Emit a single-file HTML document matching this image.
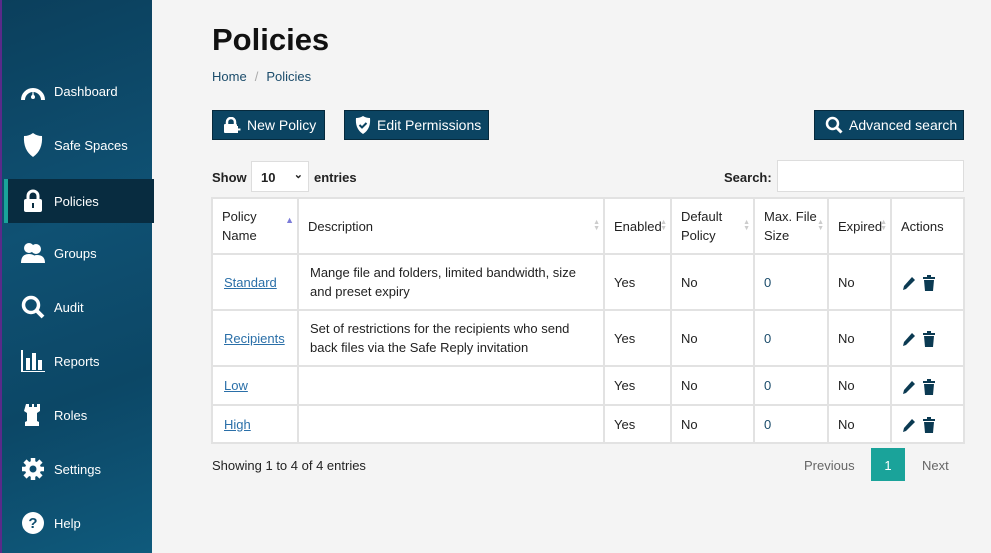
<!DOCTYPE html><html><head><style>
*{box-sizing:border-box;margin:0;padding:0}
body{width:991px;height:553px;overflow:hidden;background:#f4f4f4;font-family:"Liberation Sans",sans-serif;font-size:13px;color:#222;position:relative}
.sb{position:absolute;left:0;top:0;width:152px;height:553px;background:linear-gradient(160deg,#0b3f5c 0%,#0f5173 40%,#0c4766 70%,#0f5a7c 100%);border-left:2px solid #5a2a8a}
.it{position:absolute;left:2px;width:150px;height:44px;color:#fff;font-size:13px;display:flex;align-items:center}
.it .ic{width:26px;height:26px;margin-left:16px;margin-right:8px;display:flex;align-items:center;justify-content:center}
.it.act{background:#082c40;border-left:4px solid #1aa39a}
.it.act .ic{margin-left:12px}
h1{position:absolute;left:212px;top:22px;font-size:31px;font-weight:bold;color:#111}
.bc{position:absolute;left:212px;top:69px;font-size:13px;color:#1b4c6b}
.bc span{color:#aaa;margin:0 8px}
.btn{position:absolute;top:110px;height:30px;background:#0b4462;color:#fff;border:1px solid #062a3d;font-size:14px;display:flex;align-items:center;padding-left:10px;gap:6px}
table{position:absolute;left:211px;top:197px;border-collapse:separate;border-spacing:2px;background:#e2e2e2;table-layout:fixed;width:754px}
td,th{background:#fff;text-align:left;vertical-align:middle;padding:0 9px;font-size:13px;line-height:19px;font-weight:normal;overflow:hidden}
th{height:54px;position:relative}
tr.t td{height:54px}
tr.s td{height:37px}
tr.s2 td{height:36px}
td a{color:#2a6fa8;text-decoration:underline}
td.n{color:#1b4c6b}
.srt{position:absolute;right:3px;top:21px;font-size:7px;color:#ccc;line-height:6px}
.ac svg{vertical-align:middle;margin-right:8px}
</style></head><body>
<div class="sb">
<div class="it" style="top:69px"><div class="ic"><svg width="24" height="22" viewBox="0 0 24 22"><path d="M2 20A10 10 0 1 1 22 20" stroke="#fff" stroke-width="4" fill="none"/><path d="M12 8l-1 9h2z" fill="#fff"/><circle cx="12" cy="17" r="2" fill="#fff"/></svg></div>Dashboard</div>
<div class="it" style="top:123px"><div class="ic"><svg width="22" height="24" viewBox="0 0 22 24"><path d="M2 3q5 0 9-3q4 3 9 3q1 14-9 21q-10-7-9-21z" fill="#fff"/></svg></div>Safe Spaces</div>
<div class="it act" style="top:179px"><div class="ic"><svg width="20" height="24" viewBox="0 0 20 24"><path d="M5 10V7a5 5 0 0 1 10 0v3" stroke="#fff" stroke-width="3" fill="none"/><rect x="1" y="10" width="18" height="13" rx="2" fill="#fff"/><rect x="9" y="14" width="2" height="5" fill="#082c40"/></svg></div>Policies</div>
<div class="it" style="top:231px"><div class="ic"><svg width="24" height="22" viewBox="0 0 24 22"><circle cx="8" cy="6" r="5" fill="#fff"/><circle cx="15" cy="7" r="5" fill="#fff"/><path d="M0 21q0-9 8-9q8 0 8 9z M10 21q0-8 6-8q8 0 8 8z" fill="#fff"/></svg></div>Groups</div>
<div class="it" style="top:285px"><div class="ic"><svg width="24" height="24" viewBox="0 0 24 24"><circle cx="10" cy="10" r="7.5" stroke="#fff" stroke-width="3.5" fill="none"/><path d="M15 15l7 7" stroke="#fff" stroke-width="4"/></svg></div>Audit</div>
<div class="it" style="top:339px"><div class="ic"><svg width="24" height="22" viewBox="0 0 24 22"><path d="M1 0v22h23" stroke="#fff" stroke-width="2" fill="none"/><rect x="5" y="8" width="4" height="12" fill="#fff"/><rect x="11" y="3" width="4" height="17" fill="#fff"/><rect x="17" y="10" width="4" height="10" fill="#fff"/></svg></div>Reports</div>
<div class="it" style="top:393px"><div class="ic"><svg width="18" height="22" viewBox="0 0 18 22"><path d="M2 0h3v3h3V0h2v3h3V0h3v7l-3 2v8l2 1v4H1v-4l2-1V9L0 7z" fill="#fff"/></svg></div>Roles</div>
<div class="it" style="top:447px"><div class="ic"><svg width="24" height="24" viewBox="0 0 24 24"><circle cx="12" cy="12" r="8" fill="#fff"/><path d="M12 1v22M1 12h22M4 4l16 16M20 4L4 20" stroke="#fff" stroke-width="4.5"/><circle cx="12" cy="12" r="3.5" fill="#0e4d6e"/></svg></div>Settings</div>
<div class="it" style="top:501px"><div class="ic"><svg width="24" height="24" viewBox="0 0 24 24"><circle cx="12" cy="12" r="11" fill="#fff"/><text x="12" y="17" text-anchor="middle" font-family="Liberation Sans" font-weight="bold" font-size="15" fill="#0e4d6e">?</text></svg></div>Help</div>
</div>
<h1>Policies</h1>
<div class="bc">Home<span>/</span>Policies</div>
<div class="btn" style="left:212px;width:113px"><svg width="18" height="16" viewBox="0 0 18 16"><path d="M4 7V5a4 4 0 0 1 8 0v2" stroke="#fff" stroke-width="2.5" fill="none"/><rect x="1" y="7" width="13" height="9" rx="1" fill="#fff"/><path d="M14 9v7M10.5 12.5h7" stroke="#fff" stroke-width="2"/></svg>New Policy</div>
<div class="btn" style="left:344px;width:145px"><svg width="16" height="18" viewBox="0 0 16 18"><path d="M1 2q4 0 7-2q3 2 7 2q1 11-7 16q-8-5-7-16z" fill="#fff"/><path d="M4.5 9l2.5 2.5 4.5-4.5" stroke="#0b4462" stroke-width="2" fill="none"/></svg>Edit Permissions</div>
<div class="btn" style="left:814px;width:150px"><svg width="18" height="18" viewBox="0 0 18 18"><circle cx="7.5" cy="7.5" r="5.5" stroke="#fff" stroke-width="2.5" fill="none"/><path d="M11.5 11.5l5 5" stroke="#fff" stroke-width="3"/></svg>Advanced search</div>
<div style="position:absolute;left:212px;top:170px;font-weight:bold;font-size:13px">Show</div>
<div style="position:absolute;left:251px;top:161px;width:58px;height:31px;background:#fff;border:1px solid #ddd;font-weight:bold;padding:8px 0 0 9px">10<span style="position:absolute;right:5px;top:6px;font-size:11px">&#8964;</span></div>
<div style="position:absolute;left:314px;top:170px;font-weight:bold">entries</div>
<div style="position:absolute;left:724px;top:170px;font-weight:bold">Search:</div>
<div style="position:absolute;left:777px;top:160px;width:187px;height:32px;background:#fff;border:1px solid #ddd"></div>
<table>
<colgroup><col style="width:84px"><col style="width:304px"><col style="width:65px"><col style="width:81px"><col style="width:72px"><col style="width:61px"><col style="width:71px"></colgroup>
<tr><th>Policy<br>Name<span class="srt" style="color:#7b7bd8;font-size:9px;top:18px">▲</span></th><th>Description<span class="srt">▲<br>▼</span></th><th style="padding-right:0">Enabled<span class="srt">▲<br>▼</span></th><th>Default<br>Policy<span class="srt">▲<br>▼</span></th><th>Max. File<br>Size<span class="srt">▲<br>▼</span></th><th style="padding-right:0">Expired<span class="srt">▲<br>▼</span></th><th>Actions</th></tr>
<tr class="t"><td style="padding-left:11px"><a>Standard</a></td><td style="padding-left:11px">Mange file and folders, limited bandwidth, size<br>and preset expiry</td><td>Yes</td><td>No</td><td class="n">0</td><td>No</td><td class="ac"><svg width="14" height="16" viewBox="0 0 14 16"><path d="M2 15l1-4 8-9 3 3-9 9z" fill="#0b3a52"/></svg><svg width="12" height="16" viewBox="0 0 12 16"><path d="M0 2h12v2H0zM4 0h4v2H4zM1 5h10l-1 11H2z" fill="#0b3a52"/></svg></td></tr>
<tr class="t"><td style="padding-left:11px"><a>Recipients</a></td><td style="padding-left:11px">Set of restrictions for the recipients who send<br>back files via the Safe Reply invitation</td><td>Yes</td><td>No</td><td class="n">0</td><td>No</td><td class="ac"><svg width="14" height="16" viewBox="0 0 14 16"><path d="M2 15l1-4 8-9 3 3-9 9z" fill="#0b3a52"/></svg><svg width="12" height="16" viewBox="0 0 12 16"><path d="M0 2h12v2H0zM4 0h4v2H4zM1 5h10l-1 11H2z" fill="#0b3a52"/></svg></td></tr>
<tr class="s"><td style="padding-left:11px"><a>Low</a></td><td></td><td>Yes</td><td>No</td><td class="n">0</td><td>No</td><td class="ac"><svg width="14" height="16" viewBox="0 0 14 16"><path d="M2 15l1-4 8-9 3 3-9 9z" fill="#0b3a52"/></svg><svg width="12" height="16" viewBox="0 0 12 16"><path d="M0 2h12v2H0zM4 0h4v2H4zM1 5h10l-1 11H2z" fill="#0b3a52"/></svg></td></tr>
<tr class="s2"><td style="padding-left:11px"><a>High</a></td><td></td><td>Yes</td><td>No</td><td class="n">0</td><td>No</td><td class="ac"><svg width="14" height="16" viewBox="0 0 14 16"><path d="M2 15l1-4 8-9 3 3-9 9z" fill="#0b3a52"/></svg><svg width="12" height="16" viewBox="0 0 12 16"><path d="M0 2h12v2H0zM4 0h4v2H4zM1 5h10l-1 11H2z" fill="#0b3a52"/></svg></td></tr>
</table>
<div style="position:absolute;left:212px;top:458px">Showing 1 to 4 of 4 entries</div>
<div style="position:absolute;left:804px;top:458px;color:#666">Previous</div>
<div style="position:absolute;left:871px;top:448px;width:34px;height:33px;background:#1aa39a;color:#fff;text-align:center;padding-top:10px">1</div>
<div style="position:absolute;left:922px;top:458px;color:#666">Next</div>
</body></html>
